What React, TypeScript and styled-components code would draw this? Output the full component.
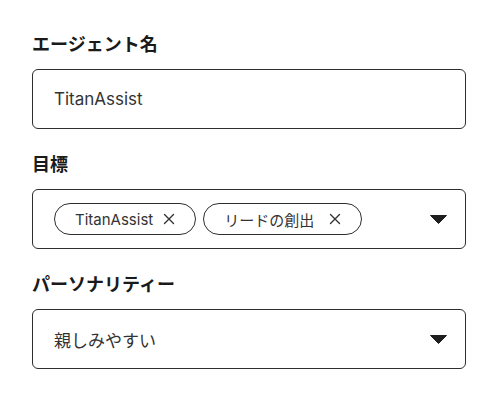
import React from "react";
import styled, { createGlobalStyle } from "styled-components";

const GlobalStyle = createGlobalStyle`
  html, body {
    margin: 0;
    padding: 0;
    background: #ffffff;
  }
  body {
    font-family: Inter, "Noto Sans CJK JP", sans-serif;
    color: #222;
  }
`;

function Caret() {
  return (
    <CaretIcon width="17" height="9" viewBox="0 0 17 9">
      <path d="M0.5 0.5 H16.5 L8.5 8.5 Z" fill="#1f1f1f" strokeLinejoin="round" stroke="#1f1f1f" strokeWidth="1" />
    </CaretIcon>
  );
}

function CloseIcon() {
  return (
    <XIcon width="12" height="12" viewBox="0 0 12 12">
      <path d="M1.5 1.5 L10.5 10.5 M10.5 1.5 L1.5 10.5" stroke="#333" strokeWidth="1.4" strokeLinecap="round" />
    </XIcon>
  );
}

export default function App() {
  const goals = [
    { label: "TitanAssist", spacing: 10 },
    { label: "リードの創出", spacing: 15 },
  ];
  return (
    <>
      <GlobalStyle />
      <Form>
        <Field>
          <Label>エージェント名</Label>
          <Box>
            <Value>TitanAssist</Value>
          </Box>
        </Field>
        <Field>
          <Label>目標</Label>
          <Box>
            <Chips>
              {goals.map((g) => (
                <Chip key={g.label} $spacing={g.spacing}>
                  <ChipText>{g.label}</ChipText>
                  <CloseIcon />
                </Chip>
              ))}
            </Chips>
            <Caret />
          </Box>
        </Field>
        <Field>
          <Label>パーソナリティー</Label>
          <Box>
            <Value>親しみやすい</Value>
            <Caret />
          </Box>
        </Field>
      </Form>
    </>
  );
}

const Form = styled.div`
  padding: 35px 34px 0 32px;
  display: flex;
  flex-direction: column;
  gap: 26px;
`;

const Field = styled.div`
  display: flex;
  flex-direction: column;
  gap: 14px;
`;

const Label = styled.div`
  font-size: 18px;
  line-height: 20px;
  font-weight: 700;
  color: #1a1a1a;
`;

const Box = styled.div`
  box-sizing: border-box;
  height: 60px;
  border: 1px solid #2e2e2e;
  border-radius: 6px;
  display: flex;
  align-items: center;
  justify-content: space-between;
  padding: 0 18px 0 21px;
`;

const Value = styled.div`
  font-size: 17px;
  color: #333;
`;

const Chips = styled.div`
  display: flex;
  gap: 7px;
`;

const Chip = styled.div<{ $spacing: number }>`
  box-sizing: border-box;
  height: 32px;
  border: 1px solid #2e2e2e;
  border-radius: 16px;
  display: flex;
  align-items: center;
  gap: ${({ $spacing }) => $spacing}px;
  padding: 0 20px 0 20px;
`;

const ChipText = styled.span`
  font-size: 15px;
  color: #333;
`;

const XIcon = styled.svg`
  display: block;
`;

const CaretIcon = styled.svg`
  display: block;
`;
